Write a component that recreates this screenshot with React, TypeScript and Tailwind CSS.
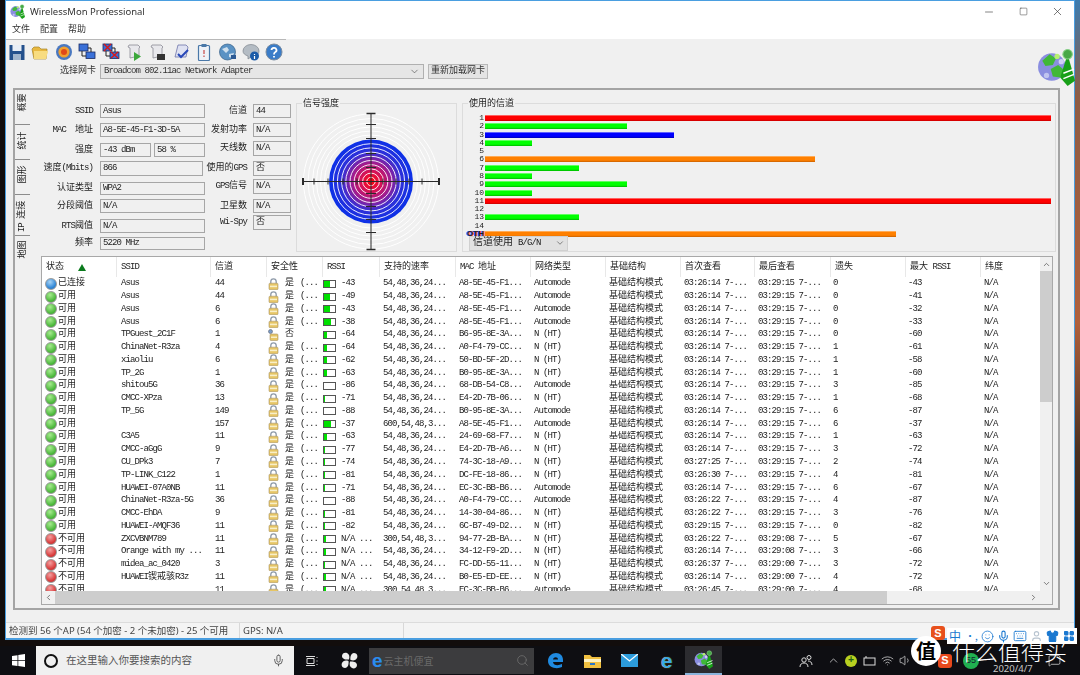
import React from 'react';
import {ChevronDown, ChevronLeft, ChevronRight, ChevronUp, Keyboard, LayoutGrid, Mic, Minus, MessageSquare, Search, Shirt, Smile, Square, User, Volume1, Wifi, X} from 'lucide-react';

const cols = 'grid grid-cols-[74px_94px_56px_56px_57px_76px_75px_75px_75px_74px_76px_75px_75px_60px]';

// latin runs are squeezed to the narrow width of the original bitmap font
const Txt = ({children}: {children: string}) => (
    <>
        {children.split(/([\u4e00-\u9fff]+)/).filter(Boolean).map((part, i) => (
            /[\u4e00-\u9fff]/.test(part)
                ? <span key={i} className="text-[9px] tracking-normal">{part}</span>
                : <span key={i} className="text-[9px] tracking-[-0.9px]">{part}</span>
        ))}
    </>
);

const leftFields = [
    {label: 'SSID', top: 'mt-[14px] h-[14px]', boxes: [['Asus', 'w-[105px]']]},
    {label: 'MAC\u00a0\u00a0地址', top: 'mt-[5px] h-[14px]', boxes: [['A8-5E-45-F1-3D-5A', 'w-[105px]']]},
    {label: '强度', top: 'mt-[6px] h-[14px]', boxes: [['-43 dBm', 'w-[51px]'], ['58 %', 'w-[51px]']]},
    {label: '速度(Mbits)', top: 'mt-[4px] h-[15px]', boxes: [['866', 'w-[103px]']]},
    {label: '认证类型', top: 'mt-[6px] h-[13px]', boxes: [['WPA2', 'w-[105px]']]},
    {label: '分段阈值', top: 'mt-[4px] h-[14px]', boxes: [['N/A', 'w-[105px]']]},
    {label: 'RTS阈值', top: 'mt-[6px] h-[14px]', boxes: [['N/A', 'w-[105px]']]},
    {label: '频率', top: 'mt-[4px] h-[13px]', boxes: [['5220 MHz', 'w-[105px]']]},
];

const rightFields = [
    ['信道', '44', 'mt-[14px] h-[14px]'],
    ['发射功率', 'N/A', 'mt-[5px] h-[14px]'],
    ['天线数', 'N/A', 'mt-[4px] h-[15px]'],
    ['使用的GPS', '否', 'mt-[5px] h-[15px]'],
    ['GPS信号', 'N/A', 'mt-[3px] h-[15px]'],
    ['卫星数', 'N/A', 'mt-[5px] h-[14px]'],
    ['Wi-Spy', '否', 'mt-[2px] h-[15px]'],
];

const barStyles = {
    red: 'bg-[linear-gradient(#ff9090,#ff0000_25%,#ff0000_70%,#c80000)]',
    green: 'bg-[linear-gradient(#90ff90,#00ff00_25%,#00ff00_70%,#00b400)]',
    blue: 'bg-[linear-gradient(#9090ff,#0000ff_25%,#0000ff_70%,#0000b4)]',
    orange: 'bg-[linear-gradient(#ffc080,#ff8000_25%,#ff8000_70%,#c86000)]',
};

const channels: [string, number, keyof typeof barStyles][] = [
    ['1', 566, 'red'], ['2', 142, 'green'], ['3', 189, 'blue'], ['4', 47, 'green'], ['5', 0, 'green'],
    ['6', 330, 'orange'], ['7', 94, 'green'], ['8', 47, 'green'], ['9', 142, 'green'], ['10', 47, 'green'],
    ['11', 566, 'red'], ['12', 0, 'green'], ['13', 94, 'green'], ['14', 0, 'green'], ['OTH', 411, 'orange'],
];

const R1 = '54,48,36,24...';
const R2 = '300,54,48,3...';
const HT = 'N (HT)';
const AM = 'Automode';
type Row = [string, string, string, boolean, string, number, string, string, string, string, string, string, string];
const rows: Row[] = [
    ['已连接', 'Asus', '44', true, '-43', 50, R1, 'A8-5E-45-F1...', AM, '03:26:14', '03:29:15', '0', '-43'],
    ['可用', 'Asus', '44', true, '-49', 50, R1, 'A8-5E-45-F1...', AM, '03:26:14', '03:29:15', '0', '-41'],
    ['可用', 'Asus', '6', true, '-43', 50, R1, 'A8-5E-45-F1...', AM, '03:26:14', '03:29:15', '0', '-32'],
    ['可用', 'Asus', '6', true, '-38', 65, R1, 'A8-5E-45-F1...', AM, '03:26:14', '03:29:15', '0', '-33'],
    ['可用', 'TPGuest_2C1F', '1', false, '-64', 25, R1, 'B6-95-8E-3A...', HT, '03:26:14', '03:29:15', '0', '-60'],
    ['可用', 'ChinaNet-R3za', '4', true, '-64', 25, R1, 'A0-F4-79-CC...', HT, '03:26:14', '03:29:15', '1', '-61'],
    ['可用', 'xiaoliu', '6', true, '-62', 25, R1, '50-BD-5F-2D...', HT, '03:26:14', '03:29:15', '1', '-58'],
    ['可用', 'TP_2G', '1', true, '-63', 25, R1, 'B0-95-8E-3A...', HT, '03:26:14', '03:29:15', '1', '-60'],
    ['可用', 'shitou5G', '36', true, '-86', 0, R1, '68-DB-54-C8...', AM, '03:26:14', '03:29:15', '3', '-85'],
    ['可用', 'CMCC-XPza', '13', true, '-71', 12, R1, 'E4-2D-7B-06...', HT, '03:26:14', '03:29:15', '1', '-68'],
    ['可用', 'TP_5G', '149', true, '-88', 0, R1, 'B0-95-8E-3A...', AM, '03:26:14', '03:29:15', '6', '-87'],
    ['可用', '', '157', true, '-37', 65, '600,54,48,3...', 'A8-5E-45-F1...', AM, '03:26:14', '03:29:15', '6', '-37'],
    ['可用', 'C3A5', '11', true, '-63', 25, R1, '24-69-68-F7...', HT, '03:26:14', '03:29:15', '1', '-63'],
    ['可用', 'CMCC-aGgG', '9', true, '-77', 5, R1, 'E4-2D-7B-A6...', HT, '03:26:14', '03:29:15', '3', '-72'],
    ['可用', 'CU_DPk3', '7', true, '-74', 12, R1, '74-3C-18-A9...', HT, '03:27:25', '03:29:15', '2', '-74'],
    ['可用', 'TP-LINK_C122', '1', true, '-81', 5, R1, 'DC-FE-18-86...', HT, '03:26:30', '03:29:15', '4', '-81'],
    ['可用', 'HUAWEI-07A0NB', '11', true, '-71', 12, R1, 'EC-3C-BB-B6...', AM, '03:26:14', '03:29:15', '6', '-67'],
    ['可用', 'ChinaNet-R3za-5G', '36', true, '-88', 0, R1, 'A0-F4-79-CC...', AM, '03:26:22', '03:29:15', '4', '-87'],
    ['可用', 'CMCC-EhDA', '9', true, '-81', 5, R1, '14-30-04-86...', HT, '03:26:22', '03:29:15', '3', '-76'],
    ['可用', 'HUAWEI-AMQF36', '11', true, '-82', 5, R1, '6C-B7-49-D2...', HT, '03:29:15', '03:29:15', '0', '-82'],
    ['不可用', 'ZXCVBNM789', '11', true, 'N/A ...', 15, R2, '94-77-2B-BA...', HT, '03:26:22', '03:29:08', '5', '-67'],
    ['不可用', 'Orange with my ...', '11', true, 'N/A ...', 15, R1, '34-12-F9-2D...', HT, '03:26:14', '03:29:08', '3', '-66'],
    ['不可用', 'midea_ac_0420', '3', true, 'N/A ...', 5, R1, 'FC-DD-55-11...', HT, '03:26:37', '03:29:00', '3', '-72'],
    ['不可用', 'HUAWEI锲戒骇R3z', '11', true, 'N/A ...', 15, R1, 'B0-E5-ED-EE...', HT, '03:26:14', '03:29:00', '4', '-72'],
    ['不可用', '', '11', true, 'N/A ...', 15, R2, 'EC-3C-BB-B6...', AM, '03:26:45', '03:29:00', '4', '-68'],
];

const headers = ['SSID', '信道', '安全性', 'RSSI', '支持的速率', 'MAC\u00a0地址', '网络类型', '基础结构', '首次查看', '最后查看', '遗失', '最大\u00a0RSSI', '纬度'];

const Lock = ({open}: {open: boolean}) => (
    <svg width="11" height="12" viewBox="0 0 11 12" className="shrink-0">
        {open ? (
            <>
                <circle cx="2.5" cy="2.5" r="2" fill="#7a9cc8" stroke="#6b7280" strokeWidth="0.7"/>
                <rect x="2" y="5" width="8" height="6.5" rx="1" fill="#e6c565" stroke="#a8956a" strokeWidth="0.6"/>
                <rect x="3" y="7.5" width="6" height="1.5" fill="#f8efc8"/>
            </>
        ) : (
            <>
                <path d="M2.8 6V3.6a2.7 2.7 0 0 1 5.4 0V6" fill="none" stroke="#8d99a8" strokeWidth="1.3"/>
                <rect x="1" y="5.2" width="9" height="6.5" rx="1" fill="#e6c565" stroke="#a8956a" strokeWidth="0.6"/>
                <rect x="2" y="7.6" width="7" height="1.6" fill="#f8efc8"/>
            </>
        )}
    </svg>
);

const StatusDot = ({status}: {status: string}) => {
    const look = status === '已连接'
        ? 'bg-[radial-gradient(circle_at_40%_30%,#a8d4f5,#2f86d6_65%,#2a6cb0)]'
        : status === '可用'
            ? 'bg-[radial-gradient(circle_at_40%_30%,#a8ec90,#4cb83c_65%,#3c9a30)]'
            : 'bg-[radial-gradient(circle_at_40%_30%,#f4a0a0,#d83a3a_65%,#b02c2c)]';
    return <div className={`w-[12px] h-[12px] rounded-full border border-[#9a9a9a] shrink-0 ${look}`}/>;
};

const Signal = ({fill}: {fill: number}) => (
    <div className="w-[13px] h-[8px] border border-[#555] bg-white shrink-0">
        <div className="h-full bg-[#00e000]" style={{width: `${fill}%`}}/>
    </div>
);

const NetRow = ({row}: {row: Row}) => {
    const [status, ssid, channel, locked, rssi, fill, rates, mac, type, first, last, lost, max] = row;
    const cell = 'pl-[5px] whitespace-nowrap overflow-hidden flex items-center';
    const cell2 = 'pl-[4px] whitespace-nowrap overflow-hidden flex items-center';
    return (
        <div className={`${cols} h-[12.78px] shrink-0 text-[#222]`}>
            <div className="pl-[3px] flex items-center gap-[1px] whitespace-nowrap"><StatusDot status={status}/><Txt>{status}</Txt></div>
            <div className={cell}><Txt>{ssid}</Txt></div>
            <div className={cell}><Txt>{channel}</Txt></div>
            <div className="pl-[2px] flex items-center whitespace-nowrap">
                <Lock open={!locked}/>
                <span className="ml-[6px] w-[15px]"><Txt>{locked ? '是' : '否'}</Txt></span>
                {locked && <Txt>(...</Txt>}
            </div>
            <div className="pl-[1px] flex items-center gap-[5px] whitespace-nowrap"><Signal fill={fill}/><Txt>{rssi}</Txt></div>
            <div className={cell2}><Txt>{rates}</Txt></div>
            <div className={cell2}><Txt>{mac}</Txt></div>
            <div className={cell2}><Txt>{type}</Txt></div>
            <div className={cell2}><Txt>基础结构模式</Txt></div>
            <div className={cell2}><Txt>{`${first} 7-...`}</Txt></div>
            <div className={cell2}><Txt>{`${last} 7-...`}</Txt></div>
            <div className="pl-[3px] flex items-center"><Txt>{lost}</Txt></div>
            <div className="pl-[3px] flex items-center"><Txt>{max}</Txt></div>
            <div className={cell2}><Txt>N/A</Txt></div>
        </div>
    );
};

const Field = ({value, width}: {value: string; width: string}) => (
    <div className={`${width} h-full border border-[#a6a6a6] bg-[#f0f0f0] pl-[2px] flex items-center overflow-hidden whitespace-nowrap text-[#222]`}>
        <Txt>{value}</Txt>
    </div>
);

const Radar = () => {
    const cx = 74;
    const cy = 77.5;
    const inner = [4.2, 8.4, 12.6, 16.8, 21, 25.2, 29.4, 33.6, 37.8];
    const outer = [46.5, 50.5, 54.5, 58.5, 63, 67.5];
    const ticks = [-57, -43, -28, -14, 12, 25, 38, 51];
    return (
        <svg viewBox="0 0 159 147" className="w-full h-full">
            <defs>
                <radialGradient id="radarFill">
                    <stop offset="0" stopColor="#ff0000"/>
                    <stop offset="0.2" stopColor="#e0104a"/>
                    <stop offset="0.45" stopColor="#a01c90"/>
                    <stop offset="0.7" stopColor="#3030d8"/>
                    <stop offset="1" stopColor="#0a30e8"/>
                </radialGradient>
            </defs>
            {outer.map(r => <circle key={r} cx={cx} cy={cy} r={r} fill="none" stroke="#ffffff" strokeWidth="1"/>)}
            <circle cx={cx} cy={cy} r="42" fill="url(#radarFill)"/>
            {inner.map(r => <circle key={r} cx={cx} cy={cy} r={r} fill="none" stroke="#ffffff" strokeWidth="1" opacity="0.9"/>)}
            <path d={`M${cx - 68} ${cy}H${cx + 68}M${cx} ${cy - 68.5}V${cy + 68.5}`} stroke="#2a2a2a" strokeWidth="1"/>
            {ticks.map(t => <path key={t} d={`M${cx + t} ${cy - 3}V${cy + 3}`} stroke="#2a2a2a" strokeWidth="1"/>)}
            {ticks.map(t => <path key={t} d={`M${cx - 5} ${cy + t}H${cx + 5}`} stroke="#2a2a2a" strokeWidth="1"/>)}
            <path d={`M${cx - 68} ${cy - 3.5}V${cy + 3.5}M${cx + 68} ${cy - 3.5}V${cy + 3.5}`} stroke="#2a2a2a" strokeWidth="2"/>
            <path d={`M${cx - 4.5} ${cy - 68}H${cx + 4.5}M${cx - 4.5} ${cy + 68}H${cx + 4.5}`} stroke="#2a2a2a" strokeWidth="1.6"/>
        </svg>
    );
};

const Monitors = ({crossed}: {crossed?: boolean}) => (
    <>
        <rect x="1" y="1" width="9" height="7" fill="#3a70d8" stroke="#1a2a60" strokeWidth="0.8"/>
        <rect x="8" y="9" width="9" height="6.5" fill="#3a70d8" stroke="#1a2a60" strokeWidth="0.8"/>
        <path d="M4 8v5h4M13 9V5h-3" fill="none" stroke="#222" strokeWidth="1"/>
        {crossed && <path d="M2 1l7 7M9 1L2 8M9 9l7 6M16 9l-7 6" stroke="#d81818" strokeWidth="1.4"/>}
    </>
);

const Paper = () => (
    <path d="M4 2h9l2 2-1 1v8l-9 2V5L3 4z" fill="#e8e8ec" stroke="#8a8a94" strokeWidth="0.8"/>
);

const toolIcons = [
    <>
        <path d="M1.5 2h15v15h-15z" fill="#24508c"/>
        <rect x="4.5" y="2" width="9" height="6" fill="#e8eef6"/>
        <rect x="5" y="11" width="8" height="6" fill="#a0b4cc"/>
    </>,
    <>
        <path d="M1 6l2-2h5l2 2h6v1l-1 9H3z" fill="#e8b840" stroke="#a88428" strokeWidth="0.7"/>
        <path d="M3 8h14l-2 8H3z" fill="#f8dc80"/>
    </>,
    <>
        <circle cx="9" cy="9" r="8" fill="#4a78c0"/>
        <circle cx="9" cy="9" r="5.6" fill="#f0a030"/>
        <circle cx="9" cy="9" r="3" fill="#e04818"/>
    </>,
    <Monitors/>,
    <Monitors crossed/>,
    <>
        <Paper/>
        <path d="M9 9l7 4.5L9 18z" fill="#3ca83c"/>
    </>,
    <>
        <Paper/>
        <rect x="9" y="11" width="8" height="6" fill="#333"/>
    </>,
    <>
        <path d="M6 2h8l2 2-2 10H3z" fill="#dfe2f2" stroke="#6d74a8" strokeWidth="0.8"/>
        <path d="M6 11l3 3 7-7" fill="none" stroke="#2848b8" strokeWidth="2"/>
    </>,
    <>
        <rect x="3.5" y="2.5" width="11" height="15" rx="1" fill="#eef2f8" stroke="#4a78a8" strokeWidth="1.2"/>
        <rect x="6.5" y="1" width="5" height="3" fill="#4a78a8"/>
        <path d="M9 7v4M9 12.5v1.5" stroke="#c84848" strokeWidth="1.2"/>
    </>,
    <>
        <circle cx="8.5" cy="9" r="8" fill="#5a92c4" stroke="#3a6288" strokeWidth="0.7"/>
        <path d="M3 6l5-2 2 3-3 3zM10 11l5-1-2 5-3-1z" fill="#cfe0ee"/>
        <rect x="12" y="12" width="5" height="4" fill="#2c5a94"/>
    </>,
    <>
        <path d="M1 8a8 6.5 0 0 1 16 0c0 3-3 6-8 6l-3 2v-3c-3-1-5-2.500-5-5z" fill="#b4bcc4" stroke="#7c848c" strokeWidth="0.7"/>
        <circle cx="12.500" cy="13" r="4.500" fill="#1c5ca8"/>
        <path d="M12.500 11v1M12.500 13v3" stroke="#fff" strokeWidth="1.2"/>
    </>,
    <>
        <circle cx="9" cy="9" r="8" fill="#3a7cc8" stroke="#7a8ca0" strokeWidth="1"/>
        <path d="M6.500 7a2.500 2.300 0 1 1 3.600 2.200C9.200 9.700 9 10.300 9 11.500M9 13v1.500" fill="none" stroke="#fff" strokeWidth="1.800"/>
    </>,
];

const AppGlobe = ({size}: {size: number}) => (
    <svg width={size} height={size} viewBox="0 0 36 36">
        <circle cx="14" cy="18" r="13" fill="#8a8ee0"/>
        <path d="M5 12l7-6 6 4-3 6-7 1zM13 20l7-4 6 5-4 7-7-1z" fill="#40b838"/>
        <circle cx="19" cy="8" r="2.500" fill="#b8f070"/>
        <circle cx="9" cy="26" r="2.500" fill="#c0c4f0"/>
        <circle cx="23" cy="13" r="2.500" fill="#d0d0f4"/>
        <path d="M29 6l7 25-7 5-7-8z" fill="#18a018"/>
        <path d="M25 24l10-4M25 29l10-4" stroke="#fff" strokeWidth="1.500"/>
        <circle cx="29" cy="6" r="4.500" fill="#48a848" stroke="#88d088" strokeWidth="1"/>
    </svg>
);

const tabs = [
    ['概要', 'h-[34px] pb-[10px]'],
    ['统计', 'h-[35px] pb-[4px]'],
    ['图形', 'h-[35px] pb-[6px]'],
    ['IP 连接', 'h-[41px] pt-[2px]'],
    ['地图', 'h-[36px] pb-[8px]'],
];

const App = () => (
    <div className="relative w-[1080px] h-[675px] overflow-hidden bg-[#120d0c] font-['Liberation_Mono','Noto_Sans_CJK_SC',monospace] text-[9px] leading-none">
        {/* wallpaper showing on the right of the window */}
        <div className="absolute right-0 top-0 w-[5px] h-[645px] bg-[linear-gradient(#3c7cb0,#8e5c44_15%,#b0603c_50%,#4a3020_70%,#120d0c)]"/>

        <div className="relative w-[1070px] h-[640px] ml-[5px] border-x border-t border-b-2 border-[#4a9ee0] bg-[#f0f0f0] flex flex-col blur-[0.35px]">
            <div className="h-[21px] bg-white flex items-center shrink-0 font-['Noto_Sans',sans-serif]">
                <div className="ml-[4px] mr-[5px]"><AppGlobe size={15}/></div>
                <span className="text-[9.5px] text-[#333]">WirelessMon Professional</span>
                <div className="ml-auto flex items-center text-[#333]">
                    <div className="w-[34px] flex justify-center"><Minus size={12} strokeWidth={1.2}/></div>
                    <div className="w-[34px] flex justify-center"><Square size={9} strokeWidth={1.3}/></div>
                    <div className="w-[34px] flex justify-center"><X size={13} strokeWidth={1.2}/></div>
                </div>
            </div>
            <div className="h-[17px] bg-white flex items-center gap-[10px] pl-[6px] shrink-0 text-[#333]">
                <span>文件</span><span>配置</span><span>帮助</span>
            </div>
            <div className="w-[280px] h-[1px] bg-[#b8b8b8] shrink-0"/>
            <div className="h-[24px] flex items-center gap-[5.4px] pl-[2px] shrink-0">
                {toolIcons.map((icon, i) => (
                    <svg key={i} width="18" height="18" viewBox="0 0 18 18">{icon}</svg>
                ))}
            </div>
            <div className="h-[15px] flex items-center shrink-0">
                <div className="w-[94px] pr-[4px] text-right text-[#333]">选择网卡</div>
                <div className="w-[324px] h-full border border-[#b0b0b0] bg-[#e6e6e6] flex items-center pl-[3px] pr-[3px] text-[#333]">
                    <Txt>Broadcom 802.11ac Network Adapter</Txt>
                    <ChevronDown size={11} strokeWidth={1.2} className="ml-auto"/>
                </div>
                <div className="ml-[4px] w-[60px] h-full border border-[#b8b8b8] bg-[#e4e4e4] flex items-center justify-center whitespace-nowrap text-[#333]">
                    重新加载网卡
                </div>
            </div>
            <div className="absolute left-[1031px] top-[47px]"><AppGlobe size={38}/></div>

            <div className="mt-[9px] ml-[7px] w-[1047px] h-[522px] border-2 border-[#a4a4a4] flex shrink-0">
                <div className="w-[15px] flex flex-col shrink-0 text-[#222]">
                    {tabs.map(([name, look], i) => (
                        <div key={name} className={`${look} flex items-center justify-center ${i > 0 ? 'border-t border-[#8c8c8c]' : ''}`}>
                            <span className="inline-block shrink-0 -rotate-90 whitespace-nowrap"><Txt>{name}</Txt></span>
                        </div>
                    ))}
                </div>
                <div className="flex-1 flex flex-col min-w-0">
                    <div className="h-[166px] flex shrink-0">
                        <div className="w-[175px] flex flex-col shrink-0">
                            {leftFields.map(f => (
                                <div key={f.label} className={`flex ${f.top}`}>
                                    <div className="w-[63px] mr-[7px] flex items-center justify-end whitespace-nowrap text-[#222]"><Txt>{f.label}</Txt></div>
                                    <div className="flex h-full gap-[3px]">
                                        {f.boxes.map(([value, width]) => <Field key={value} value={value} width={width}/>)}
                                    </div>
                                </div>
                            ))}
                        </div>
                        <div className="w-[86px] flex flex-col shrink-0">
                            {rightFields.map(([label, value, top]) => (
                                <div key={label} className={`flex ${top}`}>
                                    <div className="w-[42px] mr-[6px] flex items-center justify-end whitespace-nowrap text-[#222]"><Txt>{label}</Txt></div>
                                    <Field value={value} width="w-[38px]"/>
                                </div>
                            ))}
                        </div>
                        <div className="relative ml-[5px] mt-[13px] w-[161px] h-[149px] border border-[#dcdcdc] shrink-0">
                            <span className="absolute left-[5px] top-[-4px] bg-[#f0f0f0] px-[1px] text-[#222]">信号强度</span>
                            <Radar/>
                        </div>
                        <div className="relative ml-[5px] mt-[13px] w-[594px] h-[149px] border border-[#dcdcdc] shrink-0 pt-[10px]">
                            <span className="absolute left-[5px] top-[-4px] bg-[#f0f0f0] px-[1px] text-[#222]">使用的信道</span>
                            {channels.map(([name, width, color]) => (
                                <div key={name} className="h-[8.27px] flex items-center">
                                    <div className={`w-[21px] text-right text-[8px] text-[#222] ${name === 'OTH' ? "font-bold font-['Liberation_Sans',sans-serif] [text-shadow:-1px_0_#2040ff,1px_0_#ff4040]" : ''}`}>{name}</div>
                                    {width > 0 && <div className={`h-[6px] ml-[1px] ${barStyles[color]}`} style={{width}}/>}
                                </div>
                            ))}
                            <div className="ml-[6px] mt-[-2px] relative w-[99px] h-[15px] bg-[#e1e1e1] border border-[#d0d0d0] flex items-center pl-[3px] text-[#222]">
                                <span className="text-[10px] mr-[5px]">信道使用</span><Txt>B/G/N</Txt>
                                <ChevronDown size={10} strokeWidth={1.2} className="ml-auto mr-[2px]"/>
                            </div>
                        </div>
                    </div>

                    <div className="ml-[11px] w-[1012px] h-[349px] border border-[#a8a8a8] bg-white flex flex-col shrink-0">
                        <div className="flex h-[334px] shrink-0">
                            <div className="w-[998px] flex flex-col overflow-hidden">
                                <div className={`${cols} h-[20.4px] shrink-0 text-[#222]`}>
                                    <div className="pl-[4px] flex items-center gap-[14px]">
                                        <span>状态</span>
                                        <span className="w-0 h-0 border-x-[4px] border-x-transparent border-b-[7px] border-b-[#0a7a1c]"/>
                                    </div>
                                    {headers.map(h => (
                                        <div key={h} className="border-l border-[#e8e8e8] pl-[4px] flex items-center whitespace-nowrap"><Txt>{h}</Txt></div>
                                    ))}
                                </div>
                                {rows.map((row, i) => <NetRow key={i} row={row}/>)}
                            </div>
                            <div className="w-[12px] bg-[#f0f0f0] flex flex-col items-center shrink-0">
                                <ChevronUp size={9} strokeWidth={2} className="mt-[3px] text-[#555]"/>
                                <div className="w-full h-[131px] bg-[#cdcdcd] mt-[2px]"/>
                                <ChevronDown size={9} strokeWidth={2} className="mt-auto mb-[3px] text-[#555]"/>
                            </div>
                        </div>
                        <div className="flex h-[13px] bg-[#f0f0f0] items-center shrink-0">
                            <div className="w-[13px] flex justify-center"><ChevronLeft size={9} strokeWidth={2} className="text-[#555]"/></div>
                            <div className="w-[832px] h-full bg-[#cdcdcd]"/>
                            <div className="ml-auto mr-[14px]"><ChevronRight size={9} strokeWidth={2} className="text-[#555]"/></div>
                        </div>
                    </div>
                </div>
            </div>

            <div className="mt-auto h-[16px] border-t border-[#dcdcdc] bg-[#f4f4f4] flex items-center shrink-0 font-['Noto_Sans','Noto_Sans_CJK_SC',sans-serif] text-[9.5px] text-[#444]">
                <div className="w-[233px] pl-[3px] h-full flex items-center whitespace-nowrap">检测到 56 个AP (54 个加密 - 2 个未加密) - 25 个可用</div>
                <div className="w-[164px] pl-[3px] h-full border-l border-[#d8d8d8] flex items-center">GPS: N/A</div>
                <div className="h-full border-l border-[#d8d8d8]"/>
            </div>
        </div>

        {/* taskbar */}
        <div className="mt-[6px] h-[29px] bg-[#0e0e12] flex items-center text-[#e8e8e8]">
            <div className="w-[36px] flex justify-center">
                <svg width="13" height="13" viewBox="0 0 13 13" fill="#fff"><path d="M0 2l5.500-.8v5H0zM6.300 1l6.700-1v6.200H6.300zM0 7h5.500v5L0 11.200zM6.300 7H13v6l-6.700-1z"/></svg>
            </div>
            <div className="w-[258px] h-full bg-[#f0f0f0] flex items-center text-[#555]">
                <div className="ml-[8px] w-[14px] h-[14px] rounded-full border-2 border-[#111]"/>
                <span className="ml-[8px] text-[10.500px] font-['Noto_Sans_CJK_SC',sans-serif]">在这里输入你要搜索的内容</span>
                <Mic size={13} strokeWidth={1.500} className="ml-auto mr-[9px] text-[#444]"/>
            </div>
            <div className="w-[36px] flex justify-center">
                <svg width="12" height="12" viewBox="0 0 12 12" fill="none" stroke="#ddd"><path d="M0 1.500h9M0 10.500h9M1 3.500h7v5H1zM11 2v1M11 5.500v1M11 9v1"/></svg>
            </div>
            <div className="w-[39px] flex justify-center">
                <svg width="17" height="17" viewBox="0 0 17 17" fill="#eee"><path d="M8 7.500C5 8 1 7 1 4s3-4 5-3 3 3 2 6.500zM9.500 8C9 5 10 1 13 1s4 3 3 5-3 3-6.500 2zM9 9.500c3-.5 7 .5 7 3.500s-3 4-5 3-3-3-2-6.500zM7.500 9C8 12 7 16 4 16s-4-3-3-5 3-3 6.500-2z"/></svg>
            </div>
            <div className="w-[165px] h-[26px] bg-[#3c3c3e] flex items-center shrink-0">
                <span className="ml-[3px] text-[19px] leading-none font-bold text-[#2a8cf0] font-['Liberation_Sans',sans-serif]">e</span>
                <span className="ml-[1px] text-[10px] text-[#6a6a6a] font-['Noto_Sans_CJK_SC',sans-serif]">云主机便宜</span>
                <Search size={13} strokeWidth={1.500} className="ml-auto mr-[5px] text-[#6e6e6e]"/>
            </div>
            <div className="ml-[3px] w-[37px] flex justify-center">
                <svg width="17" height="17" viewBox="0 0 17 17"><path d="M1 9C1 4 5 1 9 1c4.500 0 7 3 7 7v2H6c.5 3.500 5 4 9 2v3c-5 2.500-14 1-14-6zm5-1.500h5C11 4.500 6.500 4.500 6 7.500z" fill="#1f8ae0"/></svg>
            </div>
            <div className="w-[37px] flex justify-center">
                <svg width="17" height="15" viewBox="0 0 17 15"><path d="M0 2h6l2 2h9v11H0z" fill="#f0c040"/><rect x="0" y="6" width="17" height="3" fill="#fff3c0"/><rect x="6" y="10" width="5" height="2" fill="#2a78c8"/></svg>
            </div>
            <div className="w-[37px] flex justify-center">
                <svg width="17" height="13" viewBox="0 0 17 13"><rect width="17" height="13" fill="#2c9cdc"/><path d="M0 0l8.500 7L17 0" fill="none" stroke="#fff" strokeWidth="1.300"/></svg>
            </div>
            <div className="w-[37px] flex justify-center">
                <span className="text-[21px] leading-none font-bold text-[#38a8e8] font-['Liberation_Sans',sans-serif] [text-shadow:0_0_1px_#f0c020]">e</span>
            </div>
            <div className="w-[37px] h-full bg-[#2c2c30] border-b-2 border-[#8ab4dc] flex justify-center items-center"><AppGlobe size={19}/></div>

            <div className="ml-[75px] w-[18px] flex justify-center">
                <svg width="14" height="14" viewBox="0 0 14 14" fill="none" stroke="#ddd"><circle cx="5" cy="6" r="2.200"/><circle cx="10" cy="3.500" r="2"/><path d="M1 13c0-3 2-4 4-4s4 1 4 4M9 7c2 0 4 1 4 4"/></svg>
            </div>
            <div className="ml-[9px] w-[18px] flex justify-center"><ChevronUp size={13} strokeWidth={1.300}/></div>
            <div className="w-[18px] flex justify-center">
                <div className="w-[12px] h-[12px] rounded-full bg-[#b8d020] flex items-center justify-center text-[10px] font-bold text-[#206010]">+</div>
            </div>
            <div className="w-[18px] flex justify-center">
                <svg width="13" height="11" viewBox="0 0 13 11" fill="none" stroke="#ddd"><rect x="1" y="3" width="11" height="7"/><path d="M3 3V1"/></svg>
            </div>
            <div className="w-[18px] flex justify-center"><Wifi size={13} strokeWidth={1.300}/></div>
            <div className="w-[18px] flex justify-center"><Volume1 size={13} strokeWidth={1.300}/></div>
            <div className="ml-[24px] w-[14px] h-[14px] rounded-[3px] bg-[#e8481c] flex items-center justify-center text-[11px] font-bold text-white font-['Liberation_Sans',sans-serif]">S</div>
            <div className="ml-[11px] w-[16px] h-[16px] rounded-full bg-[#20b050] flex items-center justify-center text-[9px] text-[#123] font-['Liberation_Sans',sans-serif]">55</div>
            <div className="ml-[14px] self-end mb-[2px] w-[39px] text-[9.500px] text-[#c8c8c8] whitespace-nowrap font-['Noto_Sans',sans-serif]">2020/4/7</div>
            <div className="ml-[15px] w-[14px] flex justify-center"><MessageSquare size={13} strokeWidth={1.300}/></div>
        </div>

        {/* watermark and IME bar floating over window and taskbar */}
        <div className="absolute left-[947px] top-[628px] w-[130px] h-[16px] bg-white flex items-center text-[#1a78d0] font-['Noto_Sans_CJK_SC',sans-serif]">
            <div className="w-[16.5px] flex justify-center text-[12px]">中</div>
            <div className="w-[16.5px] flex justify-center text-[10px]">•,</div>
            <div className="w-[16.5px] flex justify-center"><Smile size={13} strokeWidth={1.5}/></div>
            <div className="w-[16.5px] flex justify-center"><Mic size={13} strokeWidth={2}/></div>
            <div className="w-[16.5px] flex justify-center"><Keyboard size={14} strokeWidth={1.5}/></div>
            <div className="w-[16.5px] flex justify-center"><User size={13} strokeWidth={2} className="text-[#b8c4d0]"/></div>
            <div className="w-[16.5px] flex justify-center"><Shirt size={13} strokeWidth={2} fill="#1a78d0"/></div>
            <div className="w-[16.5px] flex justify-center"><LayoutGrid size={12} strokeWidth={2} fill="#1a78d0"/></div>
        </div>
        <div className="absolute left-[931px] top-[626px] w-[14px] h-[14px] rounded-[3px] bg-[#e8501c] flex items-center justify-center text-[11px] font-bold text-white font-['Liberation_Sans',sans-serif]">S</div>
        <div className="absolute left-[911px] top-[636px] w-[30px] h-[30px] rounded-full bg-white flex items-center justify-center text-[20px] font-bold text-black font-['Noto_Sans_CJK_SC',sans-serif]">值</div>
        <div className="absolute left-[952px] top-[637px] text-[23px] leading-[26px] whitespace-nowrap text-white font-['Noto_Sans_CJK_SC',sans-serif] font-light">什么值得买</div>
    </div>
);

export default App;
